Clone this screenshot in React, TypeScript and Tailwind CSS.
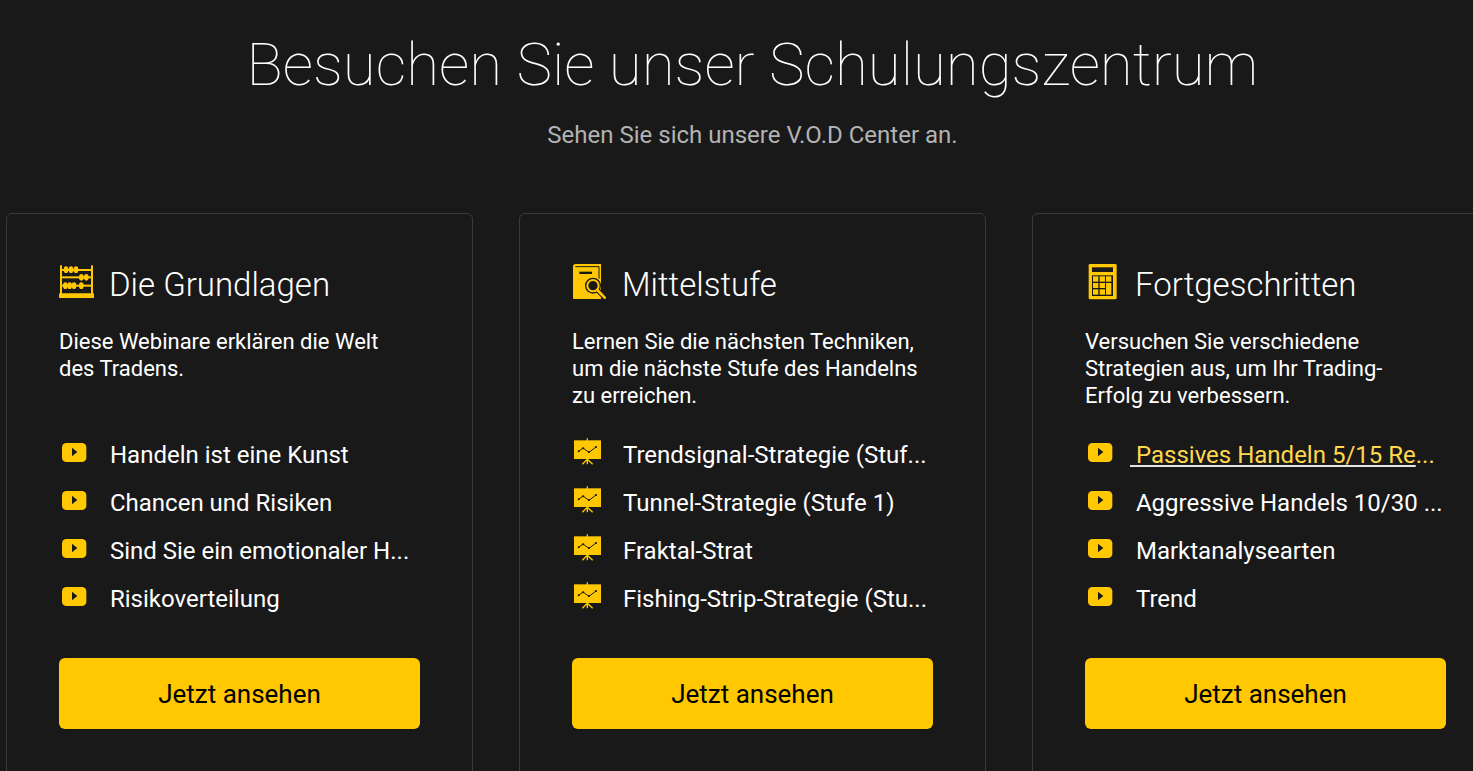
import type { ReactNode } from "react";

type Course = {
    id: string;
    title: string;
    description: string;
    icon: ReactNode;
    itemIcon: ReactNode;
    items: { label: string; cut?: boolean; active?: boolean }[];
};

const AbacusIcon = () => (
    <svg className="size-9 shrink-0" viewBox="57 42 108 108" fill="#ffc800" aria-hidden="true">
        <rect x="60" y="46" width="6" height="86" />
        <rect x="153" y="46" width="6" height="86" />
        <rect x="57" y="130" width="105" height="14" rx="2" />
        <rect x="64" y="57" width="92" height="6" />
        <rect x="64" y="79" width="92" height="6" />
        <rect x="64" y="104" width="92" height="6" />
        {[78, 93, 108].map((x) => <ellipse key={x} cx={x} cy="59" rx="7" ry="10" />)}
        {[124, 139].map((x) => <ellipse key={x} cx={x} cy="82" rx="7" ry="10" />)}
        {[76, 89, 102, 124].map((x) => <ellipse key={x} cx={x} cy="107" rx="7" ry="10" />)}
    </svg>
);

const BookIcon = () => (
    <svg className="size-9 shrink-0" viewBox="51 42 108 108" aria-hidden="true">
        <path d="M62 42h76v105H58q-4 0-4-4V50q0-8 8-8z" fill="#ffc800" />
        <path d="M61 50h71v36" fill="none" stroke="#191919" strokeWidth="3" />
        <rect x="73" y="65" width="38" height="7" fill="#191919" />
        <path d="M128 121l25 25" stroke="#191919" strokeWidth="15" />
        <circle cx="114" cy="107" r="24" fill="#191919" />
        <circle cx="114" cy="107" r="17" fill="#191919" stroke="#ffc800" strokeWidth="6" />
        <path d="M127 120l22 23" stroke="#ffc800" strokeWidth="8" strokeLinecap="round" />
    </svg>
);

const CalculatorIcon = () => (
    <svg className="size-9 shrink-0" viewBox="45 42 108 108" aria-hidden="true">
        <rect x="56" y="42" width="84" height="106" rx="4" fill="#ffc800" />
        <rect x="66" y="52" width="63" height="14" fill="#191919" />
        <rect x="66" y="76" width="63" height="62" fill="#191919" />
        <g fill="#ffc800">
            <rect x="69" y="79" width="16" height="16" />
            <rect x="89" y="79" width="16" height="16" />
            <rect x="108" y="79" width="16" height="16" />
            <rect x="69" y="99" width="16" height="15" />
            <rect x="89" y="99" width="16" height="15" />
            <rect x="69" y="118" width="16" height="16" />
            <rect x="89" y="118" width="16" height="16" />
            <rect x="108" y="99" width="16" height="35" />
        </g>
    </svg>
);

const VideoIcon = () => (
    <svg className="h-7 w-[30px] shrink-0" viewBox="27 9 90 84" aria-hidden="true">
        <rect x="36" y="24" width="73" height="57" rx="13" fill="#ffc800" />
        <path d="M66 38l16 13-16 13z" fill="#191919" />
    </svg>
);

const ChartBoardIcon = () => (
    <svg className="h-7 w-[30px] shrink-0" viewBox="21 24 90 84" aria-hidden="true">
        <rect x="27" y="31" width="81" height="56" fill="#ffc800" />
        <path d="M67 25v78M67 88L52 103M67 88l16 15" fill="none" stroke="#ffc800" strokeWidth="4" />
        <path d="M41 64l13-10 18 13 22-17" fill="none" stroke="#191919" strokeWidth="3" />
        <g fill="#191919">
            <circle cx="41" cy="64" r="3" />
            <circle cx="54" cy="55" r="3" />
            <circle cx="72" cy="66" r="3" />
            <circle cx="93" cy="51" r="3" />
        </g>
    </svg>
);

const courses: Course[] = [
    {
        id: "basic",
        title: "Die Grundlagen",
        description: "Diese Webinare erklären die Welt des Tradens.",
        icon: <AbacusIcon />,
        itemIcon: <VideoIcon />,
        items: [
            { label: "Handeln ist eine Kunst" },
            { label: "Chancen und Risiken" },
            { label: "Sind Sie ein emotionaler H", cut: true },
            { label: "Risikoverteilung" },
        ],
    },
    {
        id: "middle",
        title: "Mittelstufe",
        description: "Lernen Sie die nächsten Techniken, um die nächste Stufe des Handelns zu erreichen.",
        icon: <BookIcon />,
        itemIcon: <ChartBoardIcon />,
        items: [
            { label: "Trendsignal-Strategie (Stuf", cut: true },
            { label: "Tunnel-Strategie (Stufe 1)" },
            { label: "Fraktal-Strat" },
            { label: "Fishing-Strip-Strategie (Stu", cut: true },
        ],
    },
    {
        id: "advanced",
        title: "Fortgeschritten",
        description: "Versuchen Sie verschiedene Strategien aus, um Ihr Trading-Erfolg zu verbessern.",
        icon: <CalculatorIcon />,
        itemIcon: <VideoIcon />,
        items: [
            { label: "Passives Handeln 5/15 Re", cut: true, active: true },
            { label: "Aggressive Handels 10/30 ", cut: true },
            { label: "Marktanalysearten" },
            { label: "Trend" },
        ],
    },
];

function CourseCard({ course }: { course: Course }) {
    return (
        <section className="rounded-md border border-[#3a3a3a] px-[52px] pt-[50px] pb-[52px]">
            <div className="flex gap-3.5">
                {course.icon}
                <h2 className="pt-px text-[33px] leading-10 font-light whitespace-nowrap">{course.title}</h2>
            </div>
            <p className="mt-[23px] min-h-[81px] pr-3 text-[22px] leading-[27px]">{course.description}</p>
            <ul className="mt-[22px]">
                {course.items.map((item) => (
                    <li key={item.label} className="flex h-12 items-center gap-[15px] text-2xl whitespace-nowrap">
                        <span className="-mt-1.5">{course.itemIcon}</span>
                        <span className={item.active ? "text-[#ffd84d]" : "text-white"}>
                            <a
                                href={`#${course.id}`}
                                className={item.active ? "underline decoration-[#e6e6e6] decoration-2 underline-offset-2 [text-decoration-skip-ink:none]" : ""}
                            >
                                {"\u00a0"}{item.label}
                            </a>
                            {item.cut && "..."}
                        </span>
                    </li>
                ))}
            </ul>
            <button type="button" className="mt-[35px] h-[71px] w-full rounded-md bg-[#ffc800] pt-0.5 text-[26px] text-black">
                Jetzt ansehen
            </button>
        </section>
    );
}

export default function App() {
    return (
        <main className="min-h-screen overflow-hidden bg-[#191919] font-[Roboto,sans-serif] text-white">
            <div className="-mr-[26px] ml-1.5">
                <header className="pt-[29px] text-center">
                    <h1 className="text-6xl leading-[72px] font-thin">Besuchen Sie unser Schulungszentrum</h1>
                    <p className="mt-4 text-2xl leading-9 text-[#b3b3b3]">Sehen Sie sich unsere V.O.D Center an.</p>
                </header>
                <div className="mt-[60px] grid grid-cols-3 gap-[46px]">
                    {courses.map((course) => (
                        <CourseCard key={course.id} course={course} />
                    ))}
                </div>
            </div>
        </main>
    );
}
